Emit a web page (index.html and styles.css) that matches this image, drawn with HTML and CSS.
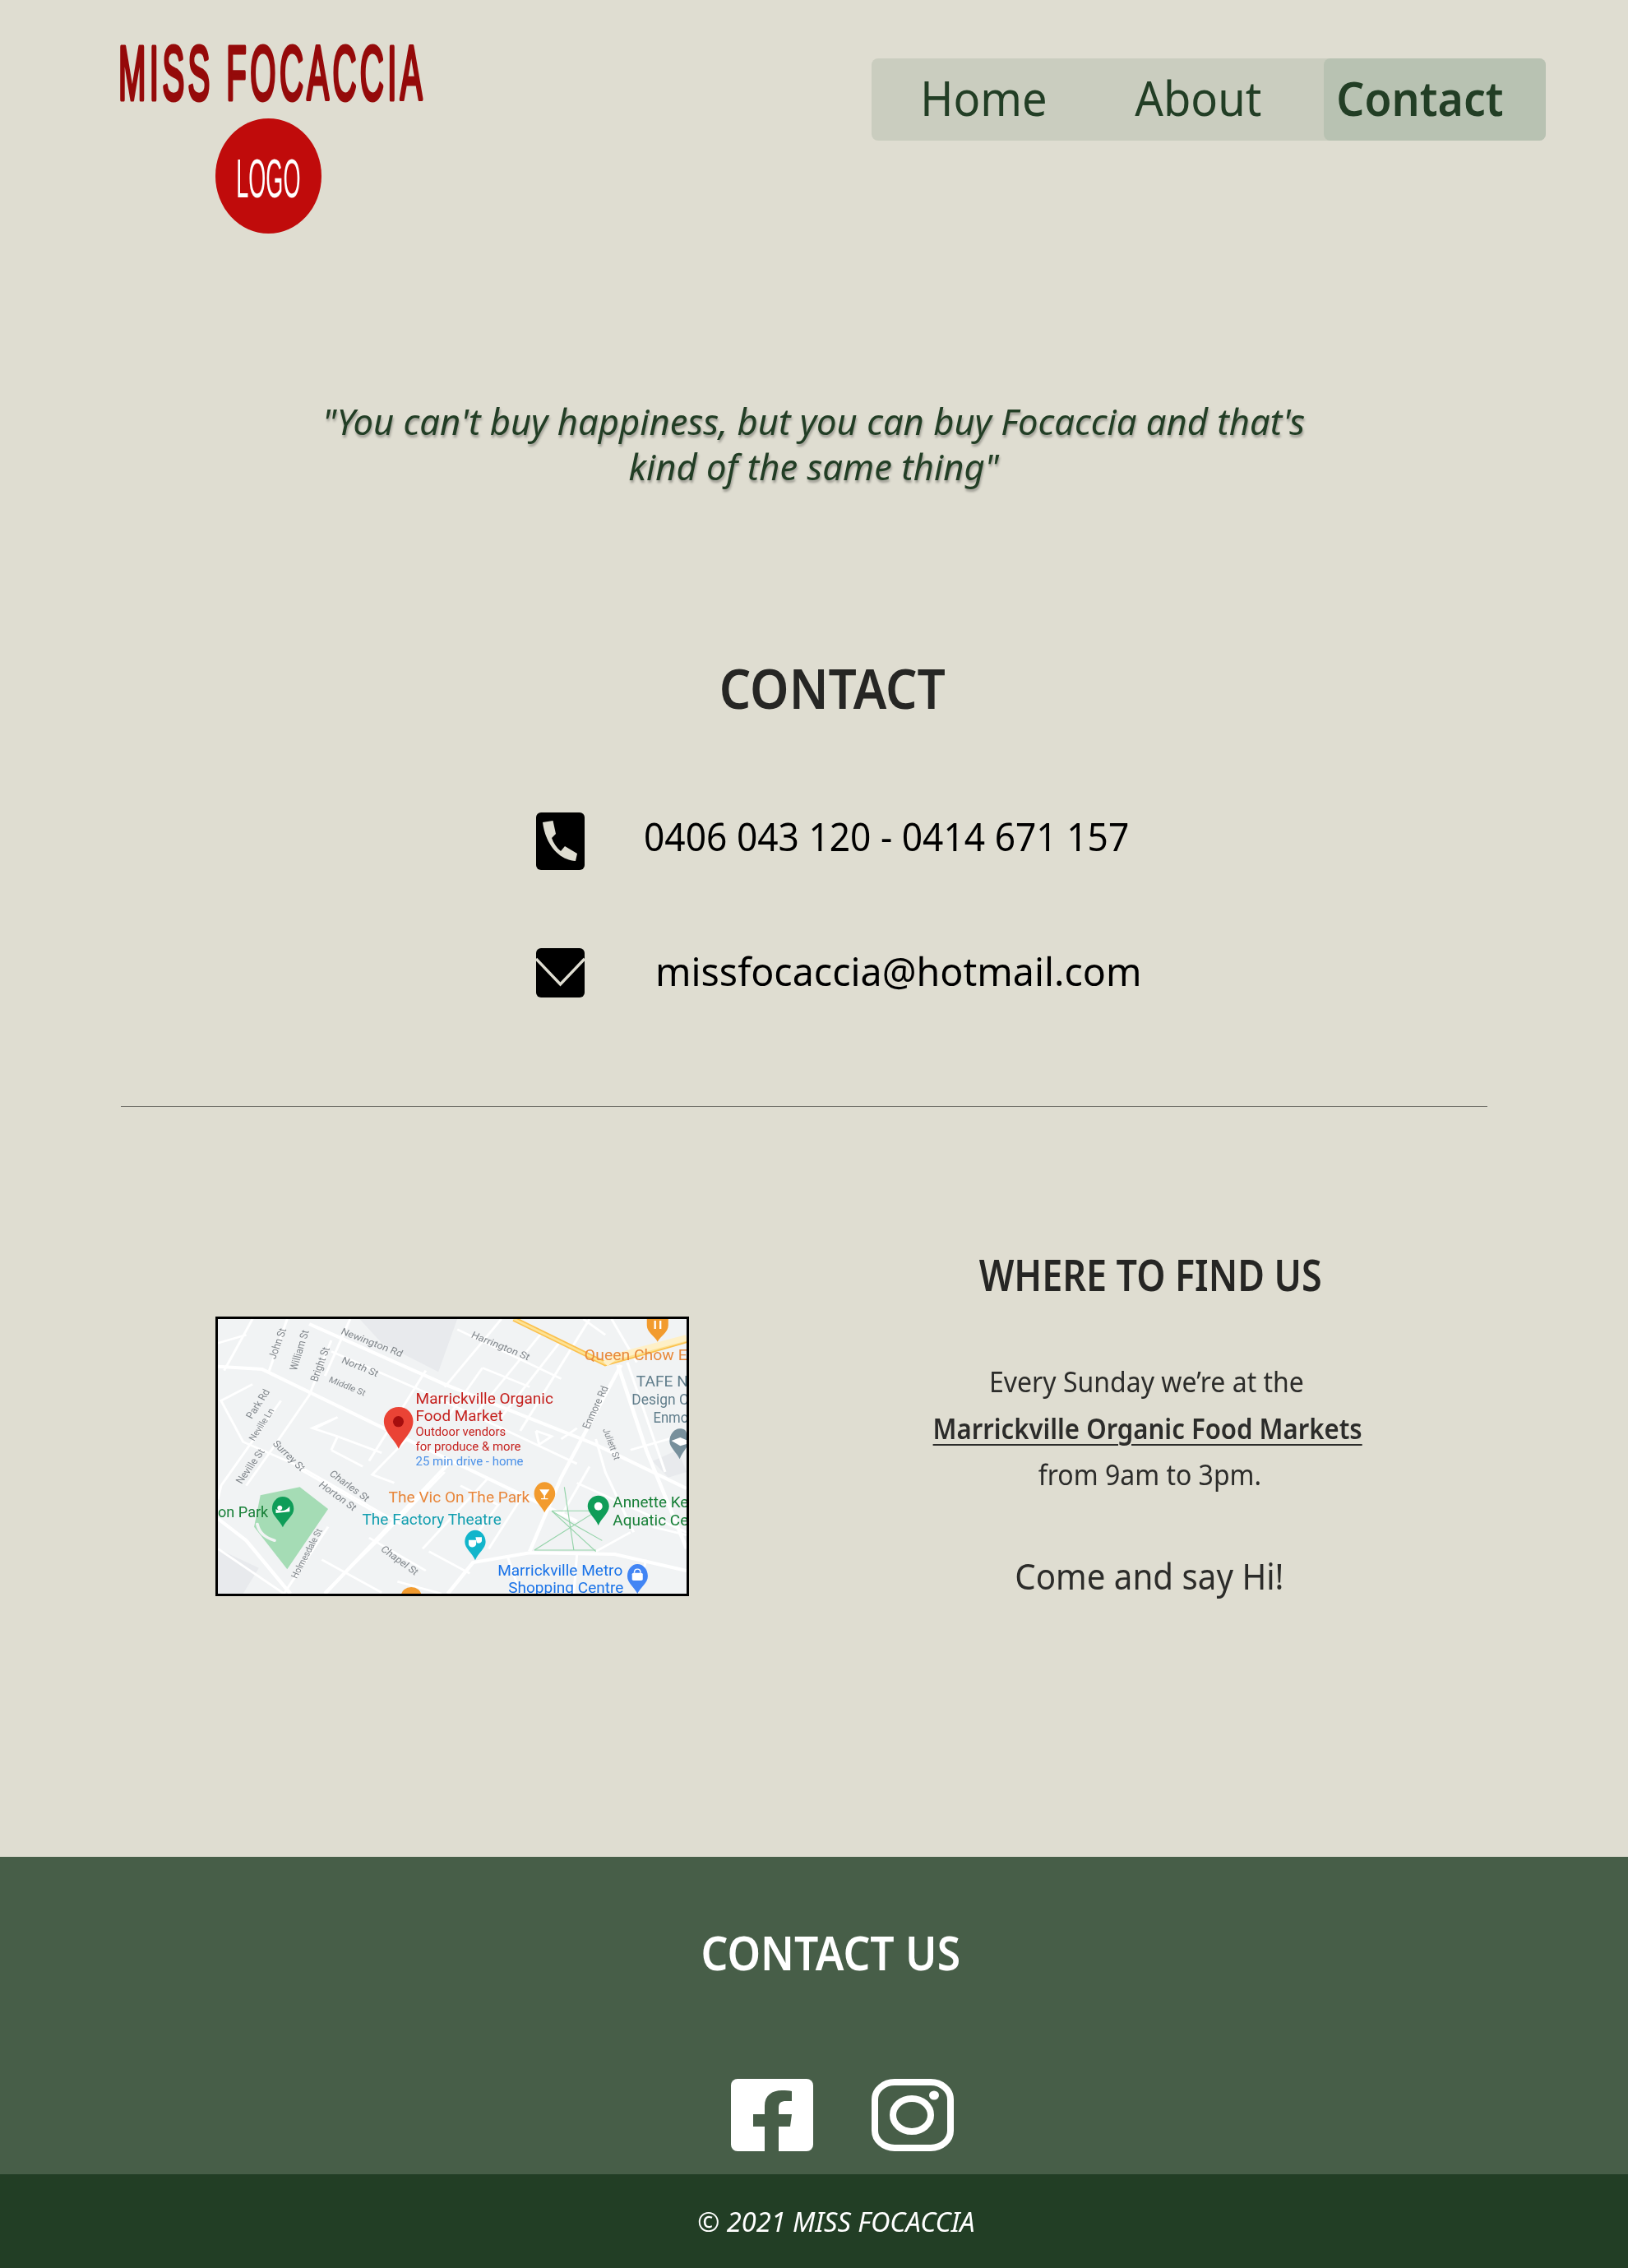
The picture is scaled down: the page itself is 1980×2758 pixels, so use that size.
FILE: index.html
```html
<!DOCTYPE html>
<html lang="en">
<head>
  <meta charset="UTF-8" />
  <title>Miss Focaccia - Contact</title>
  <link rel="stylesheet" href="styles.css">
</head>
<body>
  <header class="site-header">
    <div class="brand">
      <svg class="brand-name" viewBox="0 0 367 87"><text x="-1" y="77" textLength="374" lengthAdjust="spacingAndGlyphs">MISS FOCACCIA</text></svg>
      <div class="brand-badge"><span>LOGO</span></div>
    </div>
    <nav class="site-nav">
      <a class="nav-item nav-home" href="#"><span>Home</span></a>
      <a class="nav-item nav-about" href="#"><span>About</span></a>
      <a class="nav-item nav-contact" href="#"><span>Contact</span></a>
    </nav>
  </header>

  <p class="quote"><span>"You can't buy happiness, but you can buy Focaccia and that's<br>kind of the same thing"</span></p>

  <section class="contact">
    <h1 class="contact-title"><span>CONTACT</span></h1>
    <div class="contact-row row-phone">
      <svg class="icon-phone" viewBox="0 0 59 70"><rect width="59" height="70" rx="6" fill="#000"/><path d="M8 12 L20.5 10 L24 26 L19 31 C21 37 25 43 30 47 L35 41 L50 50 L48 59 C30 58 12 42 8 12Z" fill="#dfddd1"/></svg>
      <div class="contact-text">0406 043 120 - 0414 671 157</div>
    </div>
    <div class="contact-row row-mail">
      <svg class="icon-mail" viewBox="0 0 59 60"><rect width="59" height="60" rx="6" fill="#000"/><path d="M0 13 L29.5 44 L59 13" fill="none" stroke="#dfddd1" stroke-width="3.4"/></svg>
      <div class="contact-text">missfocaccia@hotmail.com</div>
    </div>
  </section>

  <hr class="divider">

  <section class="find">
    <div class="map-frame">
      <svg class="map" viewBox="40 42 1488 1002" preserveAspectRatio="none">
        <rect x="40" y="42" width="1488" height="1002" fill="#f1f3f4"/>
        <polygon points="490,42 800,42 740,235 560,130" fill="#e8eaed"/>
        <polygon points="40,880 170,950 120,1044 40,1044" fill="#e8eaed"/>
        <polygon points="1420,560 1500,520 1528,600 1470,620" fill="#e8eaed"/>

        <g class="road-major">
          <polyline points="40,215 180,225 620,470 1180,780"/>
          <polyline points="1320,210 1130,620 1030,890"/>
          <polyline points="780,560 380,1044"/>
          <polyline points="1310,210 1400,520 1528,880"/>
          <polyline points="770,1044 850,930 1030,895 1300,900 1528,960"/>
          <polyline points="40,770 130,850 270,1044"/>
          <polyline points="330,60 760,280 1240,500 1528,660"/>
        </g>
        <g class="road-minor">
          <polyline points="40,130 130,100"/>
          <polyline points="150,42 60,230"/>
          <polyline points="260,42 200,240"/>
          <polyline points="400,120 330,320 210,520 130,650"/>
          <polyline points="400,160 700,310 1180,570"/>
          <polyline points="150,280 50,340 120,490 300,580 620,790"/>
          <polyline points="300,590 560,760"/>
          <polyline points="240,340 50,650 40,700"/>
          <polyline points="460,42 380,250"/>
          <polyline points="700,230 520,560"/>
          <polyline points="940,42 760,290"/>
          <polyline points="1070,90 850,400"/>
          <polyline points="1220,42 1000,450"/>
          <polyline points="800,80 1130,260"/>
          <polyline points="880,220 1030,290"/>
          <polyline points="880,220 770,400"/>
          <polyline points="1130,120 940,400"/>
          <polyline points="350,440 420,400 340,440 420,470 560,530"/>
          <polyline points="400,520 500,580"/>
          <polyline points="420,470 400,520"/>
          <polyline points="640,480 530,610 600,640"/>
          <polyline points="760,600 540,860 380,1040"/>
          <polyline points="900,620 690,880"/>
          <polyline points="810,650 930,720 840,860"/>
          <polyline points="520,840 700,960"/>
          <polyline points="710,890 840,970"/>
          <polyline points="370,920 560,1040"/>
          <polyline points="1000,700 900,880"/>
          <polyline points="1050,450 1060,500 1100,470 1050,450"/>
          <polyline points="1130,480 1180,440"/>
          <polyline points="1240,480 1270,600 1360,820"/>
          <polyline points="1180,640 1528,820"/>
          <polyline points="1220,580 1130,760"/>
          <polyline points="1340,200 1460,600"/>
          <polyline points="1200,42 1270,100"/>
          <polyline points="1290,42 1370,200"/>
          <polyline points="1350,520 1500,470"/>
          <polyline points="1420,800 1528,830"/>
          <polyline points="1350,820 1240,890"/>
          <polyline points="1400,920 1370,1044"/>
          <polyline points="1180,900 1170,1044"/>
          <polyline points="960,910 1000,1044"/>
          <polyline points="610,1000 750,1044"/>
          <polyline points="40,880 250,1044"/>
          <polyline points="250,1044 390,800"/>
        </g>

        <polyline class="road-high-edge" points="980,42 1270,205 1528,120"/>
        <polyline class="road-high" points="980,42 1270,205 1528,120"/>
        <polyline class="road-light" points="1270,205 1300,180 1528,110"/>

        <polygon points="175,685 300,655 390,735 260,955 155,800" fill="#a5dcb5"/>
        <path d="M165 790 C170 820 190 840 220 850" fill="none" stroke="#f1f3f4" stroke-width="10" stroke-linecap="round"/>
        <g class="spokes">
          <line x1="1100" y1="742" x2="1240" y2="742"/>
          <line x1="1100" y1="742" x2="1240" y2="890"/>
          <line x1="1100" y1="742" x2="1175" y2="795"/>
          <line x1="1045" y1="885" x2="1225" y2="755"/>
          <line x1="1045" y1="885" x2="1240" y2="885"/>
          <line x1="1140" y1="655" x2="1170" y2="885"/>
          <line x1="1175" y1="795" x2="1260" y2="850"/>
        </g>

        <g class="road-label">
          <text transform="translate(428 95) rotate(24)">Newington Rd</text>
          <text transform="translate(430 200) rotate(25)">North St</text>
          <text transform="translate(390 270) rotate(25)" class="tiny">Middle St</text>
          <text transform="translate(842 108) rotate(25)">Harrington St</text>
          <text transform="translate(222 190) rotate(-72)">John St</text>
          <text transform="translate(290 232) rotate(-75)">William St</text>
          <text transform="translate(355 272) rotate(-72)">Bright St</text>
          <text transform="translate(148 408) rotate(-60)">Park Rd</text>
          <text transform="translate(155 488) rotate(-60)" class="tiny">Neville Ln</text>
          <text transform="translate(115 645) rotate(-58)">Neville St</text>
          <text transform="translate(212 498) rotate(48)">Surrey St</text>
          <text transform="translate(392 610) rotate(40)">Charles St</text>
          <text transform="translate(358 650) rotate(40)">Horton St</text>
          <text transform="translate(555 885) rotate(40)">Chapel St</text>
          <text transform="translate(290 990) rotate(-65)" class="tiny">Holmesdale St</text>
          <text transform="translate(1218 445) rotate(-68)">Enmore Rd</text>
          <text transform="translate(1262 445) rotate(72)" class="tiny">Juliett St</text>
        </g>

        <text class="label label-red" x="668" y="350" textLength="437" lengthAdjust="spacingAndGlyphs">Marrickville Organic</text>
        <text class="label label-red" x="668" y="415" textLength="277" lengthAdjust="spacingAndGlyphs">Food Market</text>
        <text class="sub label-red" x="668" y="468" textLength="286" lengthAdjust="spacingAndGlyphs">Outdoor vendors</text>
        <text class="sub label-red" x="668" y="522" textLength="334" lengthAdjust="spacingAndGlyphs">for produce &amp; more</text>
        <text class="sub label-blue" x="668" y="575" textLength="342" lengthAdjust="spacingAndGlyphs">25 min drive - home</text>
        <text class="label label-orange" x="582" y="712" textLength="448" lengthAdjust="spacingAndGlyphs">The Vic On The Park</text>
        <text class="label label-teal" x="498" y="791" textLength="442" lengthAdjust="spacingAndGlyphs">The Factory Theatre</text>
        <text class="label label-green" x="40" y="765" textLength="160" lengthAdjust="spacingAndGlyphs">on Park</text>
        <text class="label label-green" x="1294" y="728" textLength="240" lengthAdjust="spacingAndGlyphs">Annette Ke</text>
        <text class="label label-green" x="1294" y="794" textLength="240" lengthAdjust="spacingAndGlyphs">Aquatic Ce</text>
        <text class="label label-orange2" x="1204" y="191" textLength="326" lengthAdjust="spacingAndGlyphs">Queen Chow E</text>
        <text class="label label-slate" x="1368" y="288" textLength="165" lengthAdjust="spacingAndGlyphs">TAFE N</text>
        <text class="label label-slate" x="1354" y="355" textLength="180" lengthAdjust="spacingAndGlyphs">Design C</text>
        <text class="label label-slate" x="1422" y="420" textLength="112" lengthAdjust="spacingAndGlyphs">Enmo</text>
        <text class="label label-metro" x="928" y="978" textLength="397" lengthAdjust="spacingAndGlyphs">Marrickville Metro</text>
        <text class="label label-metro" x="962" y="1042" textLength="366" lengthAdjust="spacingAndGlyphs">Shopping Centre</text>

        <path d="M614 515 C600 480 567 455 567 415 C567 385 588 363 614 363 C640 363 660 385 660 415 C660 455 628 480 614 515Z" fill="#ea4335"/>
        <ellipse cx="613" cy="416" rx="17" ry="20" fill="#a50e0e"/>
        <path d="M1436 125 C1428 105 1402 90 1402 65 L1402 42 L1470 42 L1470 65 C1470 90 1444 105 1436 125Z" fill="#f29b2e"/>
        <path d="M1428 48 V78 M1445 48 V78" stroke="#fff" stroke-width="6"/>
        <path d="M1077 748 C1068 725 1044 705 1044 680 C1044 655 1060 637 1077 637 C1094 637 1111 655 1111 680 C1111 705 1086 725 1077 748Z" fill="#f29b2e"/>
        <path d="M1061 664 H1093 L1079 686 V696 H1088 V700 H1066 V696 H1075 V686Z" fill="#fff"/>
        <path d="M1248 795 C1240 770 1214 750 1214 725 C1214 702 1230 686 1248 686 C1266 686 1282 702 1282 725 C1282 750 1256 770 1248 795Z" fill="#0f9d58"/>
        <ellipse cx="1248" cy="725" rx="13" ry="15" fill="#fff"/>
        <path d="M246 802 C238 778 212 760 212 735 C212 708 228 690 246 690 C264 690 281 708 281 735 C281 760 254 778 246 802Z" fill="#0f9d58"/>
        <path d="M224 735 C235 745 255 745 268 725 L268 745 L224 750Z M236 722 a8 9 0 1 0 1 0Z" fill="#fff"/>
        <path d="M857 922 C848 895 824 880 824 855 C824 830 840 812 857 812 C874 812 890 830 890 855 C890 880 866 895 857 922Z" fill="#12b5cb"/>
        <path d="M836 848 H860 V865 C855 878 840 878 836 865Z M858 838 H878 V852 C875 860 868 862 862 858Z" fill="#fff"/>
        <path d="M1506 553 C1498 530 1474 510 1474 488 C1474 462 1490 442 1506 442 C1522 442 1528 450 1528 462 L1528 510 C1520 525 1512 535 1506 553Z" fill="#78909c"/>
        <path d="M1480 486 L1508 474 L1528 484 L1528 498 L1508 505Z" fill="#fff"/>
        <path d="M1372 1044 C1362 1020 1340 1005 1340 980 C1340 955 1355 936 1372 936 C1390 936 1405 955 1405 980 C1405 1005 1382 1020 1372 1044Z" fill="#4285f4"/>
        <rect x="1355" y="968" width="34" height="28" rx="5" fill="#fff"/>
        <path d="M1362 968 C1362 950 1382 950 1382 968" fill="none" stroke="#fff" stroke-width="4"/>
        <ellipse cx="654" cy="1050" rx="32" ry="30" fill="#f29b2e"/>
      </svg>
    </div>
    <div class="find-text">
      <h2 class="find-title"><span>WHERE TO FIND US</span></h2>
      <p class="find-line find-first"><span>Every Sunday we’re at the</span></p>
      <p class="find-line find-strong"><span>Marrickville Organic Food Markets</span></p>
      <p class="find-line"><span>from 9am to 3pm.</span></p>
      <p class="find-hi"><span>Come and say Hi!</span></p>
    </div>
  </section>

  <footer class="site-footer">
    <div class="footer-main">
      <h2 class="footer-title"><span>CONTACT US</span></h2>
      <div class="social">
        <svg class="social-icon" viewBox="0 0 100 88"><rect width="100" height="88" rx="8" fill="#fff"/><path d="M41 88 V58 H27 V43 H41 V33 C41 20 50 14 62 14 C67 14 71 14 74 15 V27 H67 C61 27 58 29 58 35 V43 H74 L72 58 H58 V88 Z" fill="#475e48"/></svg>
        <svg class="social-icon" viewBox="0 0 100 88"><rect x="4" y="4" width="92" height="80" rx="24" ry="21" fill="none" stroke="#fff" stroke-width="8"/><ellipse cx="49" cy="44" rx="23" ry="20" fill="none" stroke="#fff" stroke-width="8"/><ellipse cx="76" cy="20" rx="6" ry="5.5" fill="#fff"/></svg>
      </div>
    </div>
    <div class="footer-copy"><span>© 2021 MISS FOCACCIA</span></div>
  </footer>
</body>
</html>
```

FILE: styles.css
```css
/* ---------- Global ---------- */
* {
  box-sizing: border-box;
}
body {
  margin: 0;
  background-color: #dfddd1;
  color: #262624;
  font-family: "Noto Sans", sans-serif;
}
h1, h2, p {
  margin: 0;
  font-weight: normal;
}
/* the reference type is narrower than any installed family */
span {
  display: inline-block;
}

/* ---------- Header ---------- */
.site-header {
  display: flex;
  justify-content: space-between;
  align-items: flex-start;
  height: 400px;
  padding: 0 100px 0 145px;
}
.brand {
  width: 367px;
  padding-top: 44px;
  display: flex;
  flex-direction: column;
  align-items: center;
  gap: 13px;
}
.brand-name {
  display: block;
  width: 367px;
  height: 87px;
  overflow: visible;
}
.brand-name text {
  font-family: "Liberation Sans", sans-serif;
  font-size: 92px;
  letter-spacing: 10px;
  fill: #950a0a;
  stroke: #950a0a;
  stroke-width: 5px;
  stroke-linejoin: round;
}
.brand-badge {
  width: 129px;
  height: 140px;
  margin-left: -4px;
  border-radius: 50%;
  background: #c00b0b;
  color: #fff;
  display: flex;
  align-items: center;
  justify-content: center;
  font-family: "Liberation Sans", sans-serif;
  font-size: 66px;
}
.brand-badge span {
  transform: scaleX(0.41);
  margin-top: 6px;
}
.site-nav {
  display: flex;
  width: 820px;
  height: 100px;
  margin-top: 71px;
  border-radius: 8px;
  background: #cacdbf;
}
.nav-item {
  display: flex;
  align-items: center;
  justify-content: center;
  color: #223e25;
  text-decoration: none;
  font-size: 58px;
}
.nav-item span {
  transform: scaleX(0.936);
  margin-top: -6px;
}
.nav-home {
  width: 272px;
  padding-left: 1px;
}
.nav-about {
  width: 250px;
  margin-right: 28px;
}
.nav-contact {
  width: 270px;
  border-radius: 8px;
  background: #b8c2b2;
  font-weight: 600;
}
.nav-contact span {
  transform: scaleX(0.924);
  margin-right: 36px;
}

/* ---------- Quote ---------- */
.quote {
  height: 320px;
  padding-top: 85px;
  text-align: center;
  font-style: italic;
  font-size: 44px;
  line-height: 55px;
  color: #223e25;
  text-shadow: 1px 3px 3px rgba(0, 0, 0, 0.3);
}
.quote span {
  transform: scaleX(0.99);
}

/* ---------- Contact ---------- */
.contact {
  height: 625px;
}
.contact-title {
  height: 268px;
  padding: 71px 0 0 44px;
  text-align: center;
  font-size: 66px;
  line-height: 90px;
  font-weight: 600;
}
.contact-title span {
  transform: scaleX(0.915);
}
.contact-row {
  display: flex;
  align-items: center;
  padding-left: 652px;
  white-space: nowrap;
  color: #000;
}
.row-phone {
  height: 70px;
  gap: 72px;
}
.row-mail {
  height: 60px;
  margin-top: 95px;
  gap: 86px;
}
.icon-phone {
  width: 59px;
  height: 70px;
  flex: none;
}
.icon-mail {
  width: 59px;
  height: 60px;
  flex: none;
}
.contact-text {
  font-size: 48px;
  transform-origin: left center;
  transform: scaleX(0.97);
  margin-top: -6px;
}
.row-phone .contact-text {
  margin-top: -14px;
  transform: scaleX(0.923);
}

/* ---------- Divider ---------- */
.divider {
  width: 1662px;
  height: 1px;
  margin: 0 0 0 147px;
  border: 0;
  background: #6f6f68;
}

/* ---------- Find us ---------- */
.find {
  display: flex;
  height: 912px;
}
.map-frame {
  width: 576px;
  height: 340px;
  margin: 255px 0 0 262px;
  border: 3px solid #000;
  flex: none;
}
.map {
  display: block;
  width: 100%;
  height: 100%;
  filter: blur(0.35px);
}
.road-major polyline {
  fill: none;
  stroke: #fff;
  stroke-width: 12;
}
.road-minor polyline {
  fill: none;
  stroke: #fff;
  stroke-width: 8;
}
.road-high-edge {
  fill: none;
  stroke: #fbc04d;
  stroke-width: 18;
}
.road-high {
  fill: none;
  stroke: #fde293;
  stroke-width: 8;
}
.road-light {
  fill: none;
  stroke: #fef0c7;
  stroke-width: 22;
}
.spokes line {
  stroke: #93d3a8;
  stroke-width: 3;
}
.road-label text {
  font-family: Roboto, sans-serif;
  font-size: 34px;
  fill: #80868b;
}
.road-label .tiny {
  font-size: 30px;
}
.label {
  font-family: Roboto, sans-serif;
  font-size: 54px;
}
.sub {
  font-family: Roboto, sans-serif;
  font-size: 42px;
}
.label-red {
  fill: #c5221f;
}
.label-blue {
  fill: #4a90e8;
}
.label-orange {
  fill: #e8863a;
}
.label-orange2 {
  fill: #e8893b;
}
.label-teal {
  fill: #129eaf;
}
.label-green {
  fill: #188038;
}
.label-slate {
  fill: #607d8b;
}
.label-metro {
  fill: #1a73e8;
}
.find-text {
  width: 600px;
  margin-left: 260px;
  text-align: center;
  white-space: nowrap;
}
.find-title {
  margin-top: 174px;
  padding-left: 2px;
  font-size: 52px;
  line-height: 60px;
  font-weight: 600;
  margin-bottom: 72px;
}
.find-title span {
  transform: scaleX(0.861);
}
.find-line {
  font-size: 35px;
  line-height: 56.5px;
  color: #2c2c2a;
}
.find-line span {
  transform: scaleX(0.914);
}
.find-first span {
  margin-right: 7px;
}
.find-strong {
  font-weight: 600;
}
.find-strong span {
  transform: scaleX(0.889);
  margin-right: 4px;
  text-decoration: underline;
  text-decoration-thickness: 2px;
  text-underline-offset: 6px;
}
.find-hi {
  margin-top: 64px;
  font-size: 44px;
  line-height: 60px;
  color: #2c2c2a;
}
.find-hi span {
  transform: scaleX(0.915);
}

/* ---------- Footer ---------- */
.footer-main {
  height: 386px;
  background: #475e48;
  color: #fff;
  text-align: center;
  padding-left: 41px;
}
.footer-title {
  padding-top: 77px;
  height: 270px;
  font-size: 58px;
  line-height: 78px;
  font-weight: 600;
}
.footer-title span {
  transform: scaleX(0.89);
}
.social {
  display: flex;
  justify-content: center;
  gap: 71px;
  padding-left: 28px;
}
.social-icon {
  width: 100px;
  height: 88px;
}
.footer-copy {
  height: 114px;
  padding-top: 35px;
  background: #223e25;
  color: #fff;
  text-align: center;
  font-style: italic;
  font-size: 33px;
  line-height: 46px;
  padding-left: 53px;
}
.footer-copy span {
  transform: scaleX(0.987);
}
```
